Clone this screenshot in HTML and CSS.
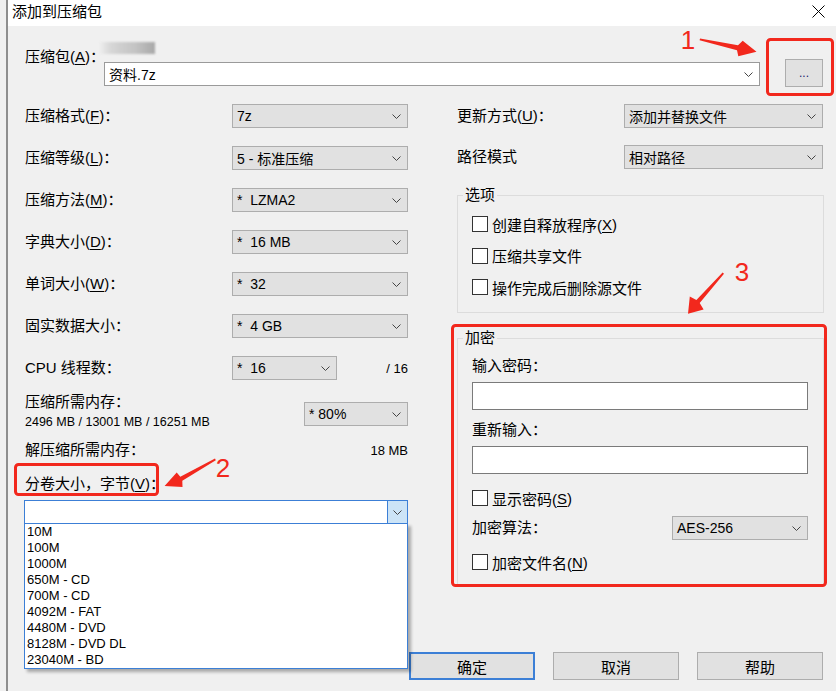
FILE: index.html
```html
<!DOCTYPE html>
<html>
<head>
  <meta charset="utf-8">
  <title>添加到压缩包</title>
  <link rel="stylesheet" href="styles.css">
</head>
<body>
  <div class="window">
    <div class="titlebar">
      <span class="title">添加到压缩包</span>
      <svg class="close" width="13" height="13" viewBox="0 0 13 13"><path d="M0.5 0.5L12.5 12.5M12.5 0.5L0.5 12.5"/></svg>
    </div>

    <div class="dialog">
      <div class="archive-row">
        <span class="label archive-label">压缩包(<u>A</u>)：</span>
        <div class="archive-path">
          <div class="blurred"></div>
          <div class="combo">资料.7z<svg class="chev" viewBox="0 0 9 5"><path d="M0.5 0.5l4 4 4-4"/></svg></div>
        </div>
        <button class="btn browse">...</button>
      </div>

      <div class="columns">
        <div class="col-left">
          <div class="field-row"><span class="label">压缩格式(<u>F</u>)：</span><div class="select">7z<svg class="chev" viewBox="0 0 9 5"><path d="M0.5 0.5l4 4 4-4"/></svg></div></div>
          <div class="field-row"><span class="label">压缩等级(<u>L</u>)：</span><div class="select">5 - 标准压缩<svg class="chev" viewBox="0 0 9 5"><path d="M0.5 0.5l4 4 4-4"/></svg></div></div>
          <div class="field-row"><span class="label">压缩方法(<u>M</u>)：</span><div class="select">*&nbsp; LZMA2<svg class="chev" viewBox="0 0 9 5"><path d="M0.5 0.5l4 4 4-4"/></svg></div></div>
          <div class="field-row"><span class="label">字典大小(<u>D</u>)：</span><div class="select">*&nbsp; 16 MB<svg class="chev" viewBox="0 0 9 5"><path d="M0.5 0.5l4 4 4-4"/></svg></div></div>
          <div class="field-row"><span class="label">单词大小(<u>W</u>)：</span><div class="select">*&nbsp; 32<svg class="chev" viewBox="0 0 9 5"><path d="M0.5 0.5l4 4 4-4"/></svg></div></div>
          <div class="field-row"><span class="label">固实数据大小：</span><div class="select">*&nbsp; 4 GB<svg class="chev" viewBox="0 0 9 5"><path d="M0.5 0.5l4 4 4-4"/></svg></div></div>
          <div class="field-row">
            <span class="label">CPU 线程数：</span>
            <div class="cpu">
              <div class="select short">*&nbsp; 16<svg class="chev" viewBox="0 0 9 5"><path d="M0.5 0.5l4 4 4-4"/></svg></div>
              <span class="note">/ 16</span>
            </div>
          </div>
          <div class="mem">
            <div>
              <div class="label">压缩所需内存：</div>
              <div class="small">2496 MB / 13001 MB / 16251 MB</div>
            </div>
            <div class="select mem-select">* 80%<svg class="chev" viewBox="0 0 9 5"><path d="M0.5 0.5l4 4 4-4"/></svg></div>
          </div>
          <div class="mem-free"><span class="label">解压缩所需内存：</span><span class="note">18 MB</span></div>
          <div class="label volume-label">分卷大小，字节(<u>V</u>)：</div>
          <div class="volume">
            <div class="combo open"><span class="combo-btn"><svg class="chev" viewBox="0 0 9 5"><path d="M0.5 0.5l4 4 4-4"/></svg></span></div>
            <ul class="droplist">
              <li>10M</li>
              <li>100M</li>
              <li>1000M</li>
              <li>650M - CD</li>
              <li>700M - CD</li>
              <li>4092M - FAT</li>
              <li>4480M - DVD</li>
              <li>8128M - DVD DL</li>
              <li>23040M - BD</li>
            </ul>
          </div>
        </div>

        <div class="col-right">
          <div class="field-row"><span class="label">更新方式(<u>U</u>)：</span><div class="select wide">添加并替换文件<svg class="chev" viewBox="0 0 9 5"><path d="M0.5 0.5l4 4 4-4"/></svg></div></div>
          <div class="field-row second"><span class="label">路径模式</span><div class="select wide">相对路径<svg class="chev" viewBox="0 0 9 5"><path d="M0.5 0.5l4 4 4-4"/></svg></div></div>

          <fieldset class="group options">
            <legend>选项</legend>
            <div class="group-body">
              <div class="check"><span class="box"></span>创建自释放程序(<u>X</u>)</div>
              <div class="check"><span class="box"></span>压缩共享文件</div>
              <div class="check"><span class="box"></span>操作完成后删除源文件</div>
            </div>
          </fieldset>

          <fieldset class="group encrypt">
            <legend>加密</legend>
            <div class="group-body">
              <div class="label">输入密码：</div>
              <div class="text-input"></div>
              <div class="label gap-label">重新输入：</div>
              <div class="text-input"></div>
              <div class="check show-pass"><span class="box"></span>显示密码(<u>S</u>)</div>
              <div class="algo"><span class="label">加密算法：</span><div class="select algo-select">AES-256<svg class="chev" viewBox="0 0 9 5"><path d="M0.5 0.5l4 4 4-4"/></svg></div></div>
              <div class="check enc-name"><span class="box"></span>加密文件名(<u>N</u>)</div>
            </div>
          </fieldset>
        </div>
      </div>

      <div class="buttons">
        <button class="btn default">确定</button>
        <button class="btn">取消</button>
        <button class="btn">帮助</button>
      </div>
    </div>
  </div>

  <!-- annotation layer -->
  <svg class="marks" width="836" height="691" viewBox="0 0 836 691">
    <rect x="767.5" y="39.5" width="65" height="55" rx="3"/>
    <rect x="15.5" y="464.5" width="142" height="30" rx="3"/>
    <rect x="452.5" y="325.5" width="373" height="260" rx="3"/>
    <polygon points="700,38.4 738,45.3 742.7,40.7 756.5,51.8 738.3,56.3 737,50.3 699.6,40.2"/>
    <polygon points="215,458.6 180.3,476.8 176.7,472.5 164.6,486 182.5,487 182.3,480.7 215.8,460.2"/>
    <polygon points="722.6,272.6 696.4,300 689.8,296.5 688,313.8 703.6,309.4 699.7,303 724,273.8"/>
    <text x="688" y="49">1</text>
    <text x="223" y="477">2</text>
    <text x="742" y="281">3</text>
  </svg>
</body>
</html>
```

FILE: styles.css
```css
body {
  margin: 0;
  width: 836px;
  height: 691px;
  overflow: hidden;
  position: relative;
  background: #f0f0f0;
  font-family: "Liberation Sans", "Noto Sans CJK SC", sans-serif;
  font-size: 15px;
  color: #000;
}

.window {
  margin-left: 6px;
  height: 691px;
  border-left: 2px solid #8e8e8e;
}

.titlebar {
  height: 26px;
  box-sizing: border-box;
  padding: 0 11px 3px 4px;
  background: #fff;
  display: flex;
  align-items: center;
  justify-content: space-between;
}
.title {
  line-height: 20px;
}
.close path {
  stroke: #000;
  stroke-width: 1;
  fill: none;
}

.dialog {
  padding: 0 12px 0 17px;
}

.label {
  line-height: 20px;
  white-space: nowrap;
}
u {
  text-underline-offset: 2px;
}

/* archive path */
.archive-row {
  display: flex;
  align-items: flex-start;
}
.archive-label {
  width: 79px;
  margin-top: 21px;
}
.archive-path {
  width: 656px;
}
.blurred {
  width: 55px;
  height: 12px;
  margin: 16px 0 8px -4px;
  background: linear-gradient(90deg, #ededed 0, #d8d8d8 18%, #cdcdcd 40%, #c3c3c3 65%, #a8a8a8 100%);
  filter: blur(1px);
}

.combo {
  height: 24px;
  box-sizing: border-box;
  border: 1px solid #9a9a9a;
  background: #fff;
  display: flex;
  align-items: center;
  justify-content: space-between;
  padding: 0 6px 0 4px;
  font-size: 14px;
}

.chev {
  width: 9px;
  height: 5px;
  flex: none;
}
.chev path {
  fill: none;
  stroke: #444;
  stroke-width: 1;
}

.btn {
  box-sizing: border-box;
  width: 126px;
  height: 28px;
  border: 1px solid #adadad;
  background: #e1e1e1;
  font-family: "Liberation Sans", "Noto Sans CJK SC", sans-serif;
  font-size: 15px;
  color: #000;
  padding: 0;
}
.browse {
  width: 38px;
  margin: 33px 0 0 25px;
  font-size: 12px;
  color: #1a1a6e;
}
.default {
  border: 2px solid #3c7fd6;
}

.select {
  width: 176px;
  height: 24px;
  box-sizing: border-box;
  border: 1px solid #adadad;
  background: #e1e1e1;
  display: flex;
  align-items: center;
  justify-content: space-between;
  padding: 0 6px 0 4px;
  font-size: 14px;
  white-space: nowrap;
}

/* columns */
.columns {
  display: flex;
  justify-content: space-between;
  margin-top: 17px;
}
.col-left {
  width: 383px;
  display: flex;
  flex-direction: column;
}
.col-right {
  width: 367px;
}

.field-row {
  display: flex;
  justify-content: space-between;
  align-items: center;
  height: 24px;
}
.col-left .field-row + .field-row {
  margin-top: 18px;
}
.field-row.second {
  margin-top: 17px;
}

.cpu {
  width: 176px;
  display: flex;
  justify-content: space-between;
  align-items: center;
}
.select.short {
  width: 105px;
}
.note {
  font-size: 13px;
}

.mem {
  display: flex;
  justify-content: space-between;
  margin-top: 12px;
}
.small {
  font-size: 12.5px;
  line-height: 20px;
}
.mem-select {
  width: 104px;
  margin-top: 10px;
}
.mem-free {
  display: flex;
  justify-content: space-between;
  align-items: center;
  margin-top: 8px;
}
.volume-label {
  margin-top: 14px;
}

.volume {
  position: relative;
  margin-top: 6px;
  margin-left: -1px;
}
.combo.open {
  width: 384px;
  border-color: #3c7fd6;
  padding: 0;
  justify-content: flex-end;
}
.combo-btn {
  width: 19px;
  height: 22px;
  border-left: 1px solid #3c7fd6;
  background: #cce4f7;
  display: flex;
  align-items: center;
  justify-content: center;
}
.droplist {
  position: absolute;
  top: 23px;
  left: 0;
  width: 384px;
  box-sizing: border-box;
  margin: 0;
  padding: 0;
  list-style: none;
  background: #fff;
  border: 1px solid #3c7fd6;
  box-shadow: 3px 3px 3px rgba(0, 0, 0, 0.3);
  z-index: 2;
}
.droplist li {
  height: 16px;
  line-height: 16px;
  padding-left: 2px;
  font-size: 13px;
}

.select.wide {
  width: 199px;
  margin-right: 1px;
}

/* group boxes */
.group {
  margin: 0;
  padding: 0;
  min-width: 0;
  border: 1px solid #dcdcdc;
}
.group legend {
  margin-left: 5px;
  padding: 0 2px;
  line-height: 20px;
}
.options {
  margin-top: 16px;
}
.options .group-body {
  padding: 9px 15px 15px 14px;
}
.options .check + .check {
  margin-top: 11.5px;
}
.encrypt {
  margin-top: 15px;
}
.encrypt .group-body {
  padding: 8px 15px 12px 14px;
}

.check {
  display: flex;
  align-items: center;
  height: 20px;
  white-space: nowrap;
}
.box {
  width: 16px;
  height: 16px;
  box-sizing: border-box;
  border: 1px solid #333;
  background: #fff;
  margin-right: 4px;
  flex: none;
}

.text-input {
  height: 28px;
  box-sizing: border-box;
  border: 1px solid #7a7a7a;
  background: #fff;
  margin-top: 6px;
}
.gap-label {
  margin-top: 10px;
}
.show-pass {
  margin-top: 14px;
}
.algo {
  display: flex;
  justify-content: space-between;
  align-items: center;
  margin-top: 8px;
}
.algo-select {
  width: 136px;
}
.enc-name {
  margin-top: 12px;
}

.buttons {
  display: flex;
  justify-content: flex-end;
  gap: 18px;
  margin-top: 67px;
  margin-right: 1px;
}

/* red annotations */
.marks {
  position: absolute;
  top: 0;
  left: 0;
  z-index: 5;
  pointer-events: none;
}
.marks rect {
  fill: none;
  stroke: #f2281d;
  stroke-width: 3;
}
.marks polygon {
  fill: #f2281d;
}
.marks text {
  fill: #f2281d;
  font-family: "Liberation Sans", sans-serif;
  font-size: 26px;
  text-anchor: middle;
}
```
